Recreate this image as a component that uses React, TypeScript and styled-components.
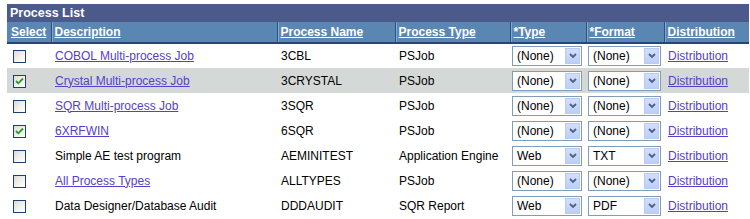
import React from "react";
import styled, { createGlobalStyle } from "styled-components";

const Global = createGlobalStyle`
  html, body { margin: 0; padding: 0; background: #ffffff; }
  body { font-family: "Liberation Sans", Arial, sans-serif; font-size: 12px; color: #000; }
`;

const Page = styled.div`
  padding: 4px 1px 0 7px;
  width: 742px;
`;

const TitleBar = styled.div`
  height: 18px;
  background: #4b5a8b;
  color: #ffffff;
  font-weight: bold;
  font-size: 12.5px;
  line-height: 18px;
  padding-left: 3px;
`;

const Grid = styled.table`
  width: 742px;
  border-collapse: collapse;
  table-layout: fixed;
`;

const HeadCell = styled.th`
  height: 20px;
  background: #5a86b4;
  border-bottom: 2px solid #24467a;
  border-left: 1px solid #2e4f80;
  box-shadow: inset 1px 0 0 #86a8cc;
  text-align: left;
  padding: 0 0 0 3px;
  &:first-child { border-left: none; box-shadow: none; padding-left: 4px; }
`;

const HeadLink = styled.a`
  color: #ffffff;
  font-weight: bold;
  font-size: 12px;
  text-decoration: underline;
`;

const Row = styled.tr<{ $alt?: boolean }>`
  height: 25px;
  background: ${(p) => (p.$alt ? "#d4d9d7" : "#ffffff")};
`;

const Cell = styled.td<{ $pad?: number }>`
  padding: 0 0 0 ${(p) => p.$pad ?? 4}px;
  vertical-align: middle;
  white-space: nowrap;
  overflow: hidden;
`;

const Link = styled.a`
  color: #5540cc;
  text-decoration: underline;
`;

const Box = styled.span`
  display: inline-flex;
  align-items: center;
  justify-content: center;
  width: 11px;
  height: 11px;
  margin-left: 2px;
  margin-top: 1px;
  border: 1px solid #1c4170;
  background: linear-gradient(135deg, #dcdcd6 0%, #f4f4f0 60%, #ffffff 100%);
  vertical-align: middle;
`;

const SelectBox = styled.div<{ $w: number }>`
  display: flex;
  align-items: center;
  box-sizing: border-box;
  width: ${(p) => p.$w}px;
  height: 20px;
  border: 1px solid #7f9db9;
  background: #ffffff;
  padding: 1px;
`;

const SelectText = styled.span`
  flex: 1;
  padding-left: 3px;
  font-size: 12px;
`;

const DropBtn = styled.span`
  display: flex;
  align-items: center;
  justify-content: center;
  width: 15px;
  height: 16px;
  box-sizing: border-box;
  border: 1px solid #b9cbf3;
  background: linear-gradient(180deg, #d2defc 0%, #bccffa 100%);
`;

const Check = () => (
  <svg width="9" height="8" viewBox="0 0 9 8">
    <path d="M1 4 L3.3 6.3 L8 1.5" fill="none" stroke="#21a121" strokeWidth="1.8" />
  </svg>
);

const Chevron = () => (
  <svg width="8" height="6" viewBox="0 0 8 6">
    <path d="M1 1 L4 4 L7 1" fill="none" stroke="#4d6185" strokeWidth="1.8" />
  </svg>
);

const Dropdown = ({ value, w }: { value: string; w: number }) => (
  <SelectBox $w={w}>
    <SelectText>{value}</SelectText>
    <DropBtn>
      <Chevron />
    </DropBtn>
  </SelectBox>
);

type Item = {
  desc: string;
  link: boolean;
  name: string;
  type: string;
  t: string;
  f: string;
  checked: boolean;
};

const items: Item[] = [
  { desc: "COBOL Multi-process Job", link: true, name: "3CBL", type: "PSJob", t: "(None)", f: "(None)", checked: false },
  { desc: "Crystal Multi-process Job", link: true, name: "3CRYSTAL", type: "PSJob", t: "(None)", f: "(None)", checked: true },
  { desc: "SQR Multi-process Job", link: true, name: "3SQR", type: "PSJob", t: "(None)", f: "(None)", checked: false },
  { desc: "6XRFWIN", link: true, name: "6SQR", type: "PSJob", t: "(None)", f: "(None)", checked: true },
  { desc: "Simple AE test program", link: false, name: "AEMINITEST", type: "Application Engine", t: "Web", f: "TXT", checked: false },
  { desc: "All Process Types", link: true, name: "ALLTYPES", type: "PSJob", t: "(None)", f: "(None)", checked: false },
  { desc: "Data Designer/Database Audit", link: false, name: "DDDAUDIT", type: "SQR Report", t: "Web", f: "PDF", checked: false },
];

const headers = ["Select", "Description", "Process Name", "Process Type", "*Type", "*Format", "Distribution"];
const widths = [44, 226, 118, 115, 76, 78, 85];

export default function App() {
  return (
    <>
      <Global />
      <Page>
        <TitleBar>Process List</TitleBar>
        <Grid>
          <colgroup>
            {widths.map((w, i) => (
              <col key={i} style={{ width: w }} />
            ))}
          </colgroup>
          <thead>
            <tr>
              {headers.map((h) => (
                <HeadCell key={h}>
                  <HeadLink>{h}</HeadLink>
                </HeadCell>
              ))}
            </tr>
          </thead>
          <tbody>
            {items.map((it, i) => (
              <Row key={it.name} $alt={i === 1}>
                <Cell $pad={4}>
                  <Box>{it.checked && <Check />}</Box>
                </Cell>
                <Cell>{it.link ? <Link>{it.desc}</Link> : it.desc}</Cell>
                <Cell>{it.name}</Cell>
                <Cell>{it.type}</Cell>
                <Cell $pad={2}>
                  <Dropdown value={it.t} w={70} />
                </Cell>
                <Cell $pad={2}>
                  <Dropdown value={it.f} w={73} />
                </Cell>
                <Cell $pad={4}>
                  <Link>Distribution</Link>
                </Cell>
              </Row>
            ))}
          </tbody>
        </Grid>
      </Page>
    </>
  );
}
